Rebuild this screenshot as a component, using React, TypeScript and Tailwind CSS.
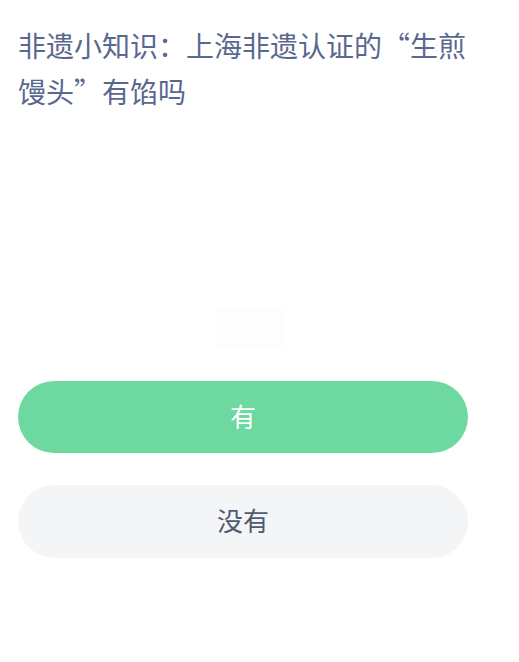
export default function App() {
  return (
    <div
      className="w-[519px] h-[662px] bg-white flex flex-col"
      style={{ fontFamily: '"Noto Sans CJK SC", "Noto Sans", sans-serif' }}
    >
      <div className="pl-[18px] pt-[22px] w-[470px]">
        <p className="text-[28px] leading-[46px] text-[#5a6890]">
          非遗小知识：上海非遗认证的“生煎馒头”有馅吗
        </p>
      </div>
      <div className="flex pl-[215px] mt-[193px]">
        <div className="w-[70px] h-[42px] bg-[#fdfdfd]" />
      </div>
      <div className="flex flex-col gap-[32px] px-[18px] mt-[32px] w-[486px]">
        <button className="h-[72px] pb-[4px] rounded-full bg-[#6dd8a0] text-white text-[26px] flex items-center justify-center">
          有
        </button>
        <button className="h-[73px] pb-[4px] rounded-full bg-[#f4f5f7] text-[#4f5b70] text-[26px] flex items-center justify-center">
          没有
        </button>
      </div>
    </div>
  );
}
